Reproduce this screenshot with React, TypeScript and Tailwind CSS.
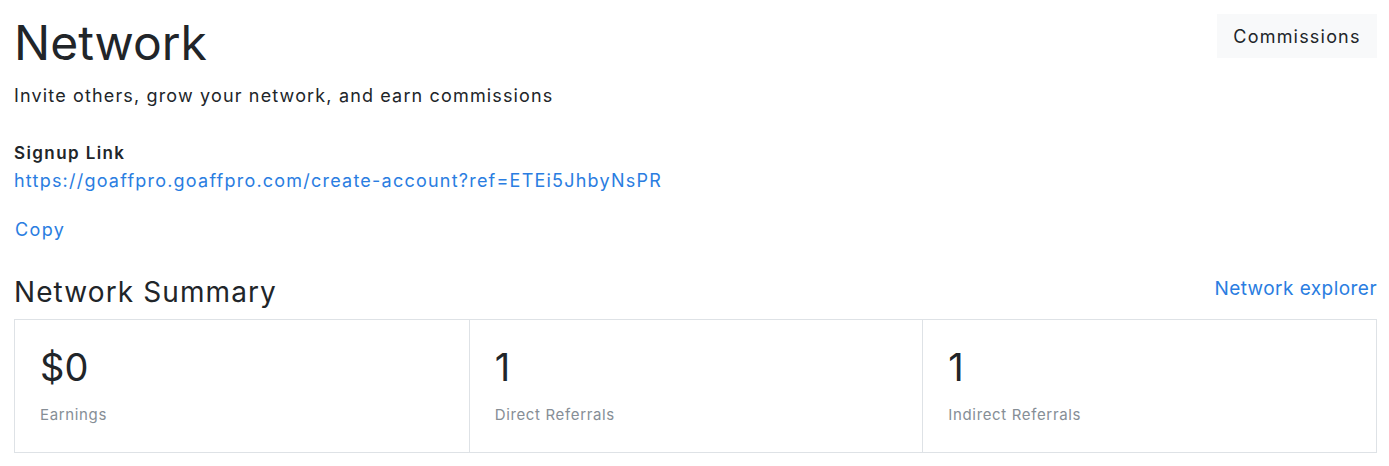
import React from "react";

const stats = [
  { value: "$0", label: "Earnings" },
  { value: "1", label: "Direct Referrals" },
  { value: "1", label: "Indirect Referrals" },
];

const App = () => {
  return (
    <div className="min-h-screen bg-white pl-[14px] pr-[12px] pt-[14px] font-['Inter',sans-serif] text-[#212529]">
      <div className="flex items-start justify-between">
        <div>
          <h1 className="text-[48px] leading-[58px] font-normal">Network</h1>
          <p className="mt-[10px] text-[18px] leading-[28px] tracking-[1.15px]">
            Invite others, grow your network, and earn commissions
          </p>
        </div>
        <button className="h-[44px] w-[160px] bg-[#f8f9fa] text-[18px] tracking-[1.2px]">
          Commissions
        </button>
      </div>

      <div className="mt-[29px]">
        <div className="text-[17px] font-semibold leading-[28px] tracking-[1.4px]">Signup Link</div>
        <a className="block text-[18px] leading-[28px] tracking-[1.22px] text-[#2a7de1]">
          https://goaffpro.goaffpro.com/create-account?ref=ETEi5JhbyNsPR
        </a>
        <button className="mt-[21px] px-[1px] text-[18px] leading-[28px] tracking-[1.4px] text-[#2a7de1]">
          Copy
        </button>
      </div>

      <div className="mt-[28px] mb-[7px] flex items-end justify-between">
        <h2 className="text-[28px] leading-[40px] tracking-[1.1px]">Network Summary</h2>
        <a className="mb-[9px] text-[19px] leading-[28px] tracking-[0.45px] text-[#2a7de1]">
          Network explorer
        </a>
      </div>

      <div className="grid grid-cols-3 border border-[#dee2e6]">
        {stats.map((s, i) => (
          <div
            key={s.label}
            className={`h-[132px] px-[25px] pt-[23px] ${i > 0 ? "border-l border-[#dee2e6]" : ""}`}
          >
            <div className="text-[38px] leading-[48px]">{s.value}</div>
            <div className="mt-[12px] text-[15px] leading-[24px] tracking-[0.65px] text-[#868e96]">{s.label}</div>
          </div>
        ))}
      </div>
    </div>
  );
};

export default App;
